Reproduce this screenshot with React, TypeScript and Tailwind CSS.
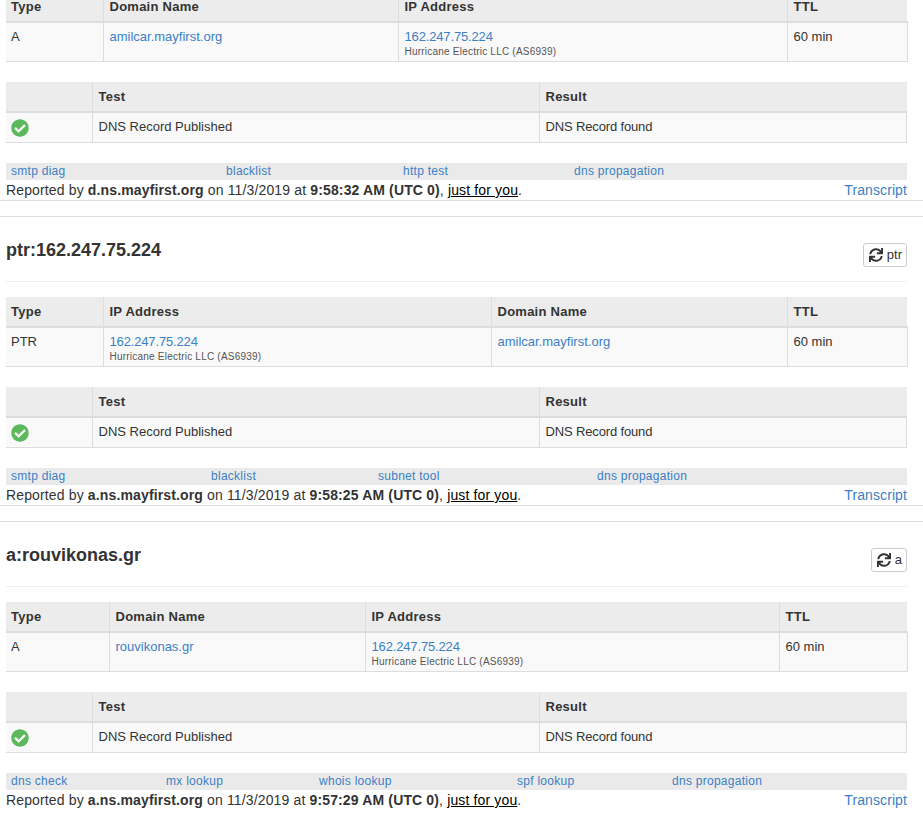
import { FaCheckCircle, FaSync } from "react-icons/fa";

const A = "text-[#3b7fc4]";

function Provider() {
  return <div className="text-[10px] leading-[11px] tracking-[0.22px] text-[#555]">Hurricane Electric LLC (AS6939)</div>;
}

function Ip() {
  return (
    <>
      <div className={`${A} leading-[18px] tracking-[-0.15px]`}>162.247.75.224</div>
      <Provider />
    </>
  );
}

type Col = { title: string; width: number; cell: React.ReactNode };

function RecordTable({ cols }: { cols: Col[] }) {
  return (
    <table className="table-fixed w-[901px] border-collapse text-[13px]">
      <colgroup>
        {cols.map((c) => (
          <col key={c.title} style={{ width: c.width }} />
        ))}
      </colgroup>
      <thead>
        <tr className="bg-[#ececec]">
          {cols.map((c, i) => (
            <th
              key={c.title}
              className={`h-[30px] border-b-2 border-[#ddd] py-0 pr-[5px] text-left font-bold tracking-[0.25px] align-middle ${i > 0 ? "border-l border-l-[#ddd] pl-[6px]" : "pl-[5px]"}`}
            >
              {c.title}
            </th>
          ))}
        </tr>
      </thead>
      <tbody>
        <tr className="bg-[#f9f9f9]">
          {cols.map((c, i) => (
            <td
              key={c.title}
              className={`h-[39px] border-b border-[#ddd] pr-[5px] pt-[5px] pb-[3px] align-top leading-[18px] ${i > 0 ? "border-l border-l-[#ddd] pl-[6px]" : "pl-[5px]"} ${i === cols.length - 1 ? "border-r border-r-[#ddd]" : ""}`}
            >
              {c.cell}
            </td>
          ))}
        </tr>
      </tbody>
    </table>
  );
}

function TestTable() {
  return (
    <table className="table-fixed w-[901px] border-collapse mt-[20px] text-[13px]">
      <colgroup>
        <col style={{ width: 86 }} />
        <col style={{ width: 447 }} />
        <col />
      </colgroup>
      <thead>
        <tr className="bg-[#ececec]">
          <th className="h-[30px] border-b-2 border-[#ddd]" />
          <th className="border-b-2 border-l border-[#ddd] pl-[6px] pr-[5px] pt-[1px] text-left font-bold tracking-[0.25px]">Test</th>
          <th className="border-b-2 border-l border-[#ddd] pl-[6px] pr-[5px] pt-[1px] text-left font-bold tracking-[0.25px]">Result</th>
        </tr>
      </thead>
      <tbody>
        <tr className="bg-[#f9f9f9]">
          <td className="h-[31px] border-b border-[#ddd] pl-[5px] pt-[1px] align-middle">
            <FaCheckCircle className="text-[#5cb85c] text-[18px]" />
          </td>
          <td className="border-b border-l border-[#ddd] pl-[6px] pr-[5px] pb-[1px] align-middle">DNS Record Published</td>
          <td className="border-b border-l border-r border-[#ddd] pl-[6px] pr-[5px] pb-[1px] align-middle tracking-[-0.15px]">DNS Record found</td>
        </tr>
      </tbody>
    </table>
  );
}

function Footer({ links, server, time }: { links: [string, number][]; server: string; time: string }) {
  return (
    <>
      <div className="mt-[20px] flex h-[17px] w-[901px] items-center bg-[#eaeaea] pb-[1px] pl-[5px] text-[12px] tracking-[0.27px]">
        {links.map(([label, w]) => (
          <span key={label} className={`${A} shrink-0`} style={{ width: w }}>
            {label}
          </span>
        ))}
      </div>
      <div className="flex h-[20px] w-[901px] items-center justify-between leading-[20px]">
        <span className="tracking-[0.14px]">
          Reported by <b>{server}</b> on 11/3/2019 at <b>{time} (UTC 0)</b>,{" "}
          <span className="text-black underline">just for you</span>.
        </span>
        <span className={`${A} tracking-[0.1px]`}>Transcript</span>
      </div>
    </>
  );
}

function Heading({ title, btn }: { title: string; btn: string }) {
  return (
    <div className="mx-[6px] flex h-[65px] w-[901px] items-start justify-between border-b border-[#eee]">
      <h2 className="mt-[23px] text-[18px] leading-[20px] font-bold">{title}</h2>
      <button className="mt-[26px] flex h-[24px] items-center gap-[4px] rounded-[3px] border border-[#ccc] bg-white pl-[5px] pr-[4px] text-[13px] text-[#333]">
        <FaSync className="text-[14px]" />
        {btn}
      </button>
    </div>
  );
}

export default function App() {
  return (
    <div
      className="h-[817px] w-[923px] overflow-hidden bg-white text-[14px] leading-[20px] text-[#333]"
      style={{ fontFamily: '"Liberation Sans", Arial, sans-serif' }}
    >
      <div className="-mt-[8px] border-b border-[#ddd] pb-0">
        <div className="mx-[6px]">
          <RecordTable
            cols={[
              { title: "Type", width: 97, cell: "A" },
              { title: "Domain Name", width: 295, cell: <span className={A}>amilcar.mayfirst.org</span> },
              { title: "IP Address", width: 389, cell: <Ip /> },
              { title: "TTL", width: 120, cell: "60 min" },
            ]}
          />
          <TestTable />
          <Footer
            links={[
              ["smtp diag", 215],
              ["blacklist", 177],
              ["http test", 171],
              ["dns propagation", 120],
            ]}
            server="d.ns.mayfirst.org"
            time="9:58:32 AM"
          />
        </div>
      </div>

      <div className="mt-[15px] border-t border-[#ddd]">
        <Heading title="ptr:162.247.75.224" btn="ptr" />
        <div className="mx-[6px] mt-[15px]">
          <RecordTable
            cols={[
              { title: "Type", width: 97, cell: "PTR" },
              { title: "IP Address", width: 388, cell: <Ip /> },
              { title: "Domain Name", width: 296, cell: <span className={A}>amilcar.mayfirst.org</span> },
              { title: "TTL", width: 120, cell: "60 min" },
            ]}
          />
          <TestTable />
          <Footer
            links={[
              ["smtp diag", 200],
              ["blacklist", 167],
              ["subnet tool", 219],
              ["dns propagation", 120],
            ]}
            server="a.ns.mayfirst.org"
            time="9:58:25 AM"
          />
        </div>
      </div>
      <div className="border-b border-[#ddd]" />

      <div className="mt-[15px] border-t border-[#ddd]">
        <Heading title="a:rouvikonas.gr" btn="a" />
        <div className="mx-[6px] mt-[15px]">
          <RecordTable
            cols={[
              { title: "Type", width: 103, cell: "A" },
              { title: "Domain Name", width: 256, cell: <span className={A}>rouvikonas.gr</span> },
              { title: "IP Address", width: 414, cell: <Ip /> },
              { title: "TTL", width: 128, cell: "60 min" },
            ]}
          />
          <TestTable />
          <Footer
            links={[
              ["dns check", 155],
              ["mx lookup", 153],
              ["whois lookup", 198],
              ["spf lookup", 155],
              ["dns propagation", 120],
            ]}
            server="a.ns.mayfirst.org"
            time="9:57:29 AM"
          />
        </div>
      </div>
    </div>
  );
}
